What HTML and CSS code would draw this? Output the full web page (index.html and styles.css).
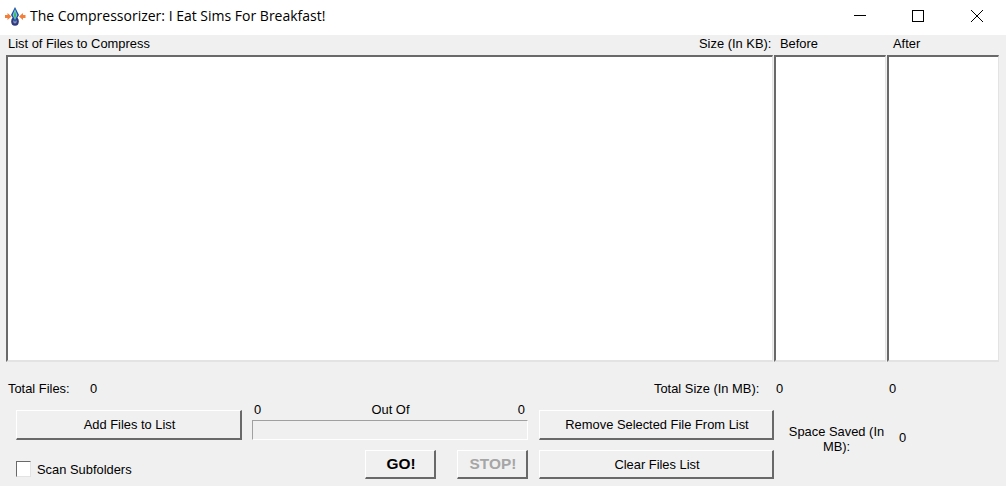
FILE: index.html
```html
<!DOCTYPE html>
<html lang="en">

<head>
    <meta charset="UTF-8">
    <meta name="viewport" content="width=device-width, initial-scale=1.0">
    <title>The Compressorizer</title>
    <link rel="stylesheet" href="styles.css">
</head>

<body>
    <div class="window">
        <!-- title bar -->
        <div class="titlebar">
            <svg class="app-icon" width="21" height="20" viewBox="0 0 21 20">
                <ellipse cx="10" cy="14.5" rx="3.8" ry="4.2" fill="#2f3a80"/>
                <ellipse cx="10" cy="14.5" rx="1.7" ry="2" fill="#8a90b8"/>
                <path d="M10 0 L14 8 L10 15 L6 8 Z" fill="#1b4f9c"/>
                <path d="M10 2 L12.4 8 L10 13 L7.6 8 Z" fill="#7fc4e8"/>
                <path d="M10 4 L11.2 8 L10 12 L8.8 8 Z" fill="#3fb85a"/>
                <path d="M0 8 H2.5 V6 L6.5 9.5 L2.5 13 V11 H0 Z" fill="#f2803a"/>
                <path d="M20.5 8 H18 V6 L14 9.5 L18 13 V11 H20.5 Z" fill="#f2803a"/>
            </svg>
            <span class="title">The Compressorizer: I Eat Sims For Breakfast!</span>
            <div class="win-buttons">
                <svg width="58" height="35" viewBox="0 0 58 35"><path d="M22 15.5 H34" stroke="#000" fill="none"/></svg>
                <svg width="58" height="35" viewBox="0 0 58 35"><rect x="22.5" y="10.5" width="11" height="11" stroke="#000" fill="none"/></svg>
                <svg width="58" height="35" viewBox="0 0 58 35"><path d="M23 10 L35 22 M35 10 L23 22" stroke="#000" fill="none"/></svg>
            </div>
        </div>

        <!-- column labels -->
        <div class="list-labels">
            <span class="label-files">List of Files to Compress</span>
            <span class="label-size">Size (In KB):</span>
            <span class="label-before">Before</span>
            <span class="label-after">After</span>
        </div>

        <!-- list boxes -->
        <div class="lists">
            <div class="listbox listbox-files"></div>
            <div class="listbox listbox-num"></div>
            <div class="listbox listbox-num"></div>
        </div>

        <!-- totals -->
        <div class="totals">
            <span class="total-files-label">Total Files:</span>
            <span class="total-files-value">0</span>
            <span class="total-size-label">Total Size (In MB):</span>
            <span class="total-before">0</span>
            <span class="total-after">0</span>
        </div>

        <!-- controls -->
        <div class="controls">
            <div class="col-left">
                <button class="btn btn-add">Add Files to List</button>
                <label class="scan"><span class="checkbox"></span><span class="scan-text">Scan Subfolders</span></label>
            </div>

            <div class="col-middle">
                <div class="progress-labels">
                    <span>0</span>
                    <span class="out-of">Out Of</span>
                    <span>0</span>
                </div>
                <div class="progress"></div>
                <div class="run-buttons">
                    <button class="btn btn-run btn-go">GO!</button>
                    <button class="btn btn-run btn-stop" disabled>STOP!</button>
                </div>
            </div>

            <div class="col-right">
                <button class="btn btn-remove">Remove Selected File From List</button>
                <button class="btn btn-clear">Clear Files List</button>
            </div>

            <div class="saved">
                <span class="saved-label">Space Saved (In MB):</span>
                <span class="saved-value">0</span>
            </div>
        </div>
    </div>
</body>

</html>
```

FILE: styles.css
```css
* {
    box-sizing: border-box;
}

html,
body {
    margin: 0;
    height: 100%;
}

body {
    font-family: "Liberation Sans", Arial, sans-serif;
    font-size: 12.9px;
    color: #000;
    background-color: #f0f0f0;
    overflow: hidden;
}

.window {
    width: 1006px;
    height: 486px;
}

/* title bar */
.titlebar {
    display: flex;
    align-items: center;
    height: 35px;
    padding-left: 5px;
    background-color: #fff;
}

.app-icon {
    flex: none;
    margin-right: 4px;
    margin-top: -1px;
}

.title {
    font-family: "Open Sans", sans-serif;
    font-size: 14px;
    margin-top: -4px;
}

.win-buttons {
    display: flex;
    margin-left: auto;
}

.win-buttons svg {
    display: block;
    margin-top: -1px;
}

/* labels over the lists */
.list-labels {
    display: flex;
    height: 20px;
    padding-top: 1px;
    padding-left: 8px;
    line-height: 15px;
}

.label-files {
    width: 691px;
}

.label-size {
    width: 81px;
}

.label-before {
    width: 113px;
}

/* lists */
.lists {
    display: flex;
    gap: 1px;
    height: 307px;
    padding-left: 6px;
}

.listbox {
    background-color: #fff;
    border-top: 2px solid #696969;
    border-left: 2px solid #696969;
    border-right: 1px solid #e3e3e3;
    border-bottom: 2px solid #e3e3e3;
}

.listbox-files {
    width: 767px;
}

.listbox-num {
    width: 112px;
}

/* totals */
.totals {
    display: flex;
    height: 40px;
    padding-top: 19px;
    padding-left: 8px;
    line-height: 15px;
}

.total-files-label {
    width: 82px;
}

.total-files-value {
    width: 564px;
}

.total-size-label {
    width: 122px;
}

.total-before {
    width: 113px;
}

/* bottom controls */
.controls {
    display: flex;
    padding-left: 16px;
}

.btn {
    display: block;
    padding: 0 0 0 2px;
    font-family: inherit;
    font-size: inherit;
    color: #000;
    background-color: #f0f0f0;
    border-top: 1px solid #fff;
    border-left: 1px solid #fff;
    border-right: 2px solid #696969;
    border-bottom: 2px solid #696969;
    border-radius: 0;
}

.col-left {
    width: 236px;
    padding-top: 8px;
}

.btn-add {
    width: 226px;
    height: 30px;
}

.scan {
    display: flex;
    align-items: center;
    margin-top: 20px;
}

.checkbox {
    width: 15px;
    height: 16px;
    margin-right: 6px;
    background-color: #fff;
    border-top: 1px solid #696969;
    border-left: 1px solid #696969;
    border-right: 1px solid #e3e3e3;
    border-bottom: 1px solid #e3e3e3;
}

.scan-text {
    margin-top: 2px;
}

.col-middle {
    width: 287px;
}

.progress-labels {
    display: flex;
    justify-content: space-between;
    width: 276px;
    height: 18px;
    padding: 0 3px 0 2px;
    line-height: 15px;
}

.out-of {
    margin-left: 2px;
}

.progress {
    width: 276px;
    height: 20px;
    background-color: #f0f0f0;
    border-top: 1px solid #a0a0a0;
    border-left: 1px solid #a0a0a0;
    border-right: 1px solid #fff;
    border-bottom: 1px solid #fff;
}

.run-buttons {
    display: flex;
    gap: 21px;
    margin-top: 10px;
    padding-left: 113px;
}

.btn-run {
    width: 71px;
    height: 29px;
    font-size: 15.4px;
    font-weight: bold;
}

.btn-stop {
    color: #a6a6a6;
}

.col-right {
    display: flex;
    flex-direction: column;
    gap: 10px;
    width: 249px;
    padding-top: 8px;
}

.btn-remove,
.btn-clear {
    width: 235px;
}

.btn-remove {
    height: 30px;
}

.btn-clear {
    height: 29px;
}

.saved {
    display: flex;
    align-items: center;
    height: 56px;
    padding-top: 17px;
}

.saved-label {
    width: 97px;
    line-height: 15px;
    text-align: center;
}

.saved-value {
    margin-left: 14px;
    margin-bottom: 2px;
}
```
